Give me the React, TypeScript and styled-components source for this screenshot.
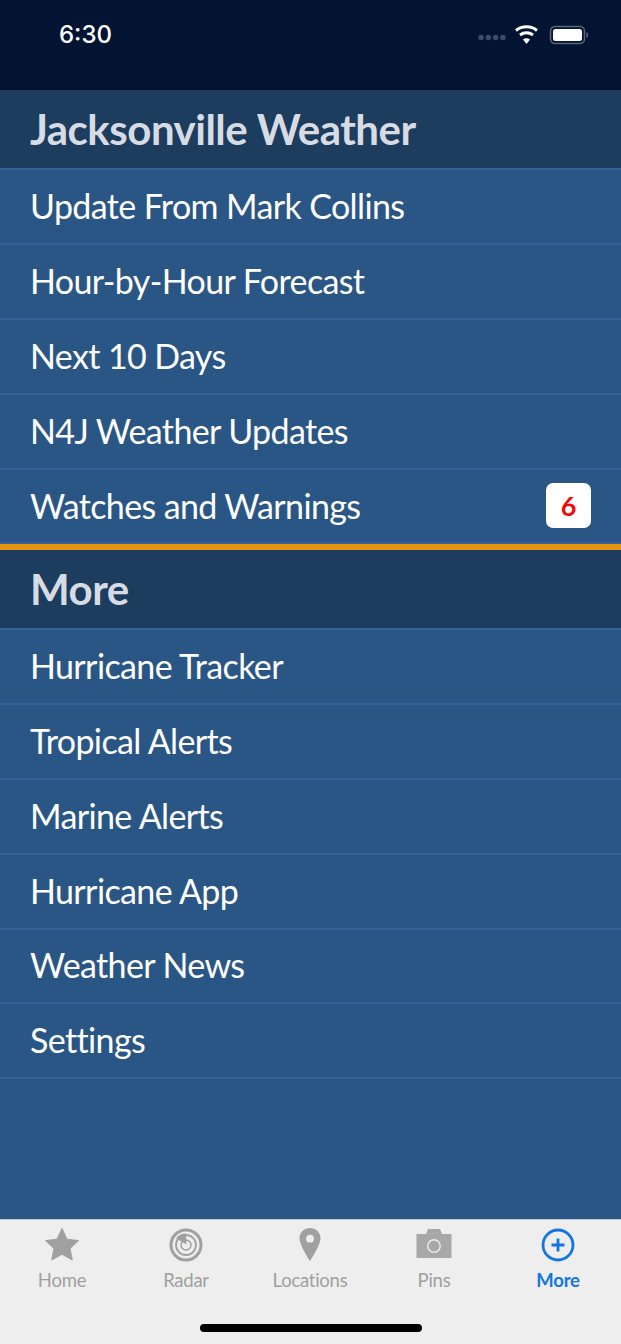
import React from 'react'
import styled, { createGlobalStyle } from 'styled-components'

const GlobalStyle = createGlobalStyle`
    html, body { margin: 0; padding: 0; background: #2a5685; }
    #root { width: 621px; height: 1344px; }
`

const Screen = styled.div`
    width: 621px;
    height: 1344px;
    display: flex;
    flex-direction: column;
    overflow: hidden;
    background: #2a5685;
    font-family: Lato, "Open Sans", sans-serif;
`

const StatusBar = styled.div`
    height: 90px;
    flex: none;
    box-sizing: border-box;
    padding: 22px 33px 0 59px;
    display: flex;
    justify-content: space-between;
    align-items: flex-start;
    background: #021431;
`

const Clock = styled.span`
    font-family: Inter, "Liberation Sans", sans-serif;
    font-size: 24px;
    line-height: 26px;
    font-weight: 500;
    color: #fff;
`

const StatusIcons = styled.div`
    display: flex;
    align-items: center;
    height: 26px;
`

const Menu = styled.div`
    flex: 1;
`

const SectionHeader = styled.div`
    height: 78px;
    box-sizing: border-box;
    padding: 0 30px;
    display: flex;
    align-items: center;
    background: #1d3d5e;
    color: #d7dce4;
    font-size: 42px;
    font-weight: 700;
    letter-spacing: -0.5px;
`

const Row = styled.div`
    height: 74.9px;
    box-sizing: border-box;
    border-top: 2px solid #33619a;
    padding: 0 30px 2px 30px;
    display: flex;
    align-items: center;
    justify-content: space-between;
    color: #fff;
    font-size: 34px;
    font-weight: 400;
    letter-spacing: -0.62px;
`

const LastRule = styled.div`
    height: 2px;
    background: #33619a;
`

const Badge = styled.span`
    width: 45px;
    height: 45px;
    border-radius: 7px;
    background: #fff;
    color: #ee0b10;
    font-size: 27px;
    font-weight: 700;
    display: flex;
    align-items: center;
    justify-content: center;
    letter-spacing: 0;
`

const OrangeRule = styled.div`
    height: 5.5px;
    border-top: 2px solid #33619a;
    background: #e8930f;
`

const TabBar = styled.div`
    height: 125px;
    flex: none;
    position: relative;
    box-sizing: border-box;
    border-top: 1px solid #b9c6d6;
    background: #eeeeee;
    display: grid;
    grid-template-columns: repeat(5, 1fr);
    padding: 7px 1px 0 0;
`

const Tab = styled.div<{ $active?: boolean }>`
    display: flex;
    flex-direction: column;
    align-items: center;
    color: ${(p) => (p.$active ? '#1276e0' : '#a0a0a0')};
    font-size: 18.5px;
    font-weight: ${(p) => (p.$active ? 700 : 400)};
    letter-spacing: -0.25px;
`

const TabIcon = styled.svg`
    width: 36px;
    height: 36px;
    display: block;
`

const TabLabel = styled.span`
    margin-top: 6px;
    line-height: 22px;
`

const HomeIndicator = styled.div`
    position: absolute;
    left: 200px;
    bottom: 12px;
    width: 222px;
    height: 8px;
    border-radius: 4px;
    background: #000;
`

const top = ['Update From Mark Collins', 'Hour-by-Hour Forecast', 'Next 10 Days', 'N4J Weather Updates']
const more = ['Hurricane Tracker', 'Tropical Alerts', 'Marine Alerts', 'Hurricane App', 'Weather News', 'Settings']

const StatusGlyphs = () => (
    <svg width="110" height="26" viewBox="0 0 110 26">
        <g fill="#3d4b64">
            <circle cx="3" cy="15.500" r="2.800" />
            <circle cx="10.300" cy="15.500" r="2.800" />
            <circle cx="17.600" cy="15.500" r="2.800" />
            <circle cx="24.900" cy="15.500" r="2.800" />
        </g>
        <g fill="none" stroke="#fff" strokeWidth="3">
            <path d="M38 8.500a17 17 0 0 1 21 0" />
            <path d="M42 13a11 11 0 0 1 13 0" />
        </g>
        <path d="M45 17.500a6 6 0 0 1 7 0L48.500 22z" fill="#fff" />
        <rect x="72.500" y="4.500" width="34" height="17" rx="4.500" fill="none" stroke="#5a6478" strokeWidth="1.500" />
        <rect x="75" y="7" width="29" height="12" rx="2.500" fill="#fff" />
        <path d="M108.500 10.500a2.500 2.500 0 0 1 0 5z" fill="#5a6478" />
    </svg>
)

const App: React.FC = () => {
    return (
        <Screen>
            <GlobalStyle />
            <StatusBar>
                <Clock>6:30</Clock>
                <StatusIcons>
                    <StatusGlyphs />
                </StatusIcons>
            </StatusBar>
            <Menu>
                <SectionHeader>Jacksonville Weather</SectionHeader>
                {top.map((t) => (
                    <Row key={t}>{t}</Row>
                ))}
                <Row>
                    Watches and Warnings
                    <Badge>6</Badge>
                </Row>
                <OrangeRule />
                <SectionHeader>More</SectionHeader>
                {more.map((t) => (
                    <Row key={t}>{t}</Row>
                ))}
                <LastRule />
            </Menu>
            <TabBar>
                <Tab>
                    <TabIcon viewBox="0 0 36 36">
                        <path
                            d="M18 1.500l5 10.700 11.500 1.400-8.500 7.900 2.300 11.500L18 27.300 7.700 33l2.300-11.500-8.500-7.900 11.500-1.400z"
                            fill="#a0a0a0"
                            stroke="#a0a0a0"
                            strokeLinejoin="round"
                        />
                    </TabIcon>
                    <TabLabel>Home</TabLabel>
                </Tab>
                <Tab>
                    <TabIcon viewBox="0 0 36 36">
                        <g fill="none" stroke="#a0a0a0">
                            <circle cx="18" cy="18" r="15" strokeWidth="3" />
                            <circle cx="18" cy="18" r="10" strokeWidth="1.800" />
                            <circle cx="18" cy="18" r="5" strokeWidth="1.500" />
                        </g>
                        <path d="M18.500 17.500L8 11.500Q11.500 6.500 18 6.500z" fill="#a0a0a0" />
                    </TabIcon>
                    <TabLabel>Radar</TabLabel>
                </Tab>
                <Tab>
                    <TabIcon viewBox="0 0 36 36">
                        <path
                            fillRule="evenodd"
                            d="M18 1c6 0 10.500 4.500 10.500 10.300C28.500 18.500 18 34 18 34S7.500 18.500 7.500 11.300C7.500 5.500 12 1 18 1zm0 6.800a3.900 3.900 0 1 0 0 7.800 3.900 3.900 0 0 0 0-7.800z"
                            fill="#a0a0a0"
                        />
                    </TabIcon>
                    <TabLabel>Locations</TabLabel>
                </Tab>
                <Tab>
                    <TabIcon viewBox="0 0 36 36">
                        <path d="M0.500 7h9.500L12 2h12l2 5h9.500v24H0.500z" fill="#a8a8a8" />
                        <circle cx="18" cy="19" r="6.200" fill="none" stroke="#eeeeee" strokeWidth="1.400" />
                    </TabIcon>
                    <TabLabel>Pins</TabLabel>
                </Tab>
                <Tab $active>
                    <TabIcon viewBox="0 0 36 36">
                        <circle cx="18" cy="18" r="15" fill="none" stroke="#1276e0" strokeWidth="2.800" />
                        <path d="M18 11.500v13M11.500 18h13" stroke="#1276e0" strokeWidth="2.800" />
                    </TabIcon>
                    <TabLabel>More</TabLabel>
                </Tab>
                <HomeIndicator />
            </TabBar>
        </Screen>
    )
}

export default App
